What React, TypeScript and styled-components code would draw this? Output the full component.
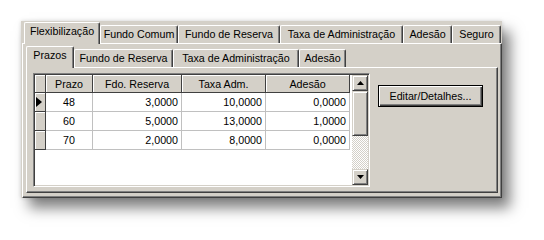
import React from 'react';
import styled, { createGlobalStyle } from 'styled-components';

const GlobalStyle = createGlobalStyle`
  html, body {
    margin: 0;
    padding: 0;
    background: #ffffff;
  }
  body {
    font-family: "Liberation Sans", Arial, sans-serif;
    font-size: 10.7px;
    color: #000;
  }
`;

const face = '#d4d0c8';

const Page = styled.div`
  width: 544px;
  height: 240px;
  box-sizing: border-box;
  padding: 21px 0 0 21px;
`;

// the outer tab control (the whole "window")
const Window = styled.div`
  width: 481px;
  height: 177px;
  box-sizing: border-box;
  padding: 1px 0 0 1px;
  background: ${face};
  display: flex;
  flex-direction: column;
  box-shadow: 8px 10px 13px rgba(0, 0, 0, 0.5), 0 0 4px rgba(0, 0, 0, 0.15);
`;

const TabStrip = styled.div<{ $indent: number }>`
  display: flex;
  align-items: flex-end;
  height: 21px;
  padding-left: ${p => p.$indent}px;
  flex-shrink: 0;
`;

const Tab = styled.div<{ $active?: boolean; $w: number }>`
  position: relative;
  z-index: ${p => (p.$active ? 2 : 1)};
  box-sizing: border-box;
  width: ${p => p.$w}px;
  height: ${p => (p.$active ? 22 : 18)}px;
  margin-bottom: ${p => (p.$active ? -1 : 0)}px;
  padding-top: 2px;
  background: ${face};
  border-top: 1px solid #fff;
  border-left: 1px solid #fff;
  border-right: 1px solid #404040;
  border-radius: 2px 2px 0 0;
  box-shadow: inset -1px 0 #808080;
  display: flex;
  justify-content: center;
  white-space: nowrap;
  line-height: 13px;
`;

const Sheet = styled.div<{ $pad: string }>`
  flex: 1;
  box-sizing: border-box;
  display: flex;
  flex-direction: column;
  padding: ${p => p.$pad};
  background: ${face};
  border-top: 1px solid #fff;
  border-left: 1px solid #fff;
  border-right: 1px solid #404040;
  border-bottom: 1px solid #404040;
  box-shadow: inset -1px -1px #808080;
`;

const SheetRow = styled.div`
  display: flex;
  align-items: flex-start;
`;

const Grid = styled.div`
  display: flex;
  width: 337px;
  height: 114px;
  box-sizing: border-box;
  padding: 1px;
  background: #fff;
  border-top: 1px solid #808080;
  border-left: 1px solid #808080;
  border-right: 1px solid #fff;
  border-bottom: 1px solid #fff;
  box-shadow: inset 1px 1px #404040, inset -1px -1px ${face};
`;

const Table = styled.div`
  width: 317px;
  display: grid;
  grid-template-columns: 11px 47px 89px 84px 84px;
  grid-template-rows: 18px repeat(3, 19px);
  align-content: start;
  background: #fff;
`;

const HeadCell = styled.div`
  box-sizing: border-box;
  background: ${face};
  border-right: 1px solid #404040;
  border-bottom: 1px solid #404040;
  box-shadow: inset 1px 1px #fff;
  display: flex;
  align-items: center;
  justify-content: center;
  white-space: nowrap;
`;

const Indicator = styled(HeadCell)`
  justify-content: flex-start;
  padding-left: 1px;
`;

const Cell = styled.div<{ $center?: boolean }>`
  box-sizing: border-box;
  border-right: 1px solid #c0c0c0;
  border-bottom: 1px solid #c0c0c0;
  display: flex;
  align-items: center;
  justify-content: ${p => (p.$center ? 'center' : 'flex-end')};
  padding: 0 3px;
`;

const ScrollBar = styled.div`
  width: 16px;
  display: flex;
  flex-direction: column;
`;

const Raised = styled.div<{ $h: number }>`
  box-sizing: border-box;
  height: ${p => p.$h}px;
  flex-shrink: 0;
  background: ${face};
  border-top: 1px solid ${face};
  border-left: 1px solid ${face};
  border-right: 1px solid #404040;
  border-bottom: 1px solid #404040;
  box-shadow: inset 1px 1px #fff, inset -1px -1px #808080;
  display: flex;
  align-items: center;
  justify-content: center;
`;

const Track = styled.div`
  flex: 1;
  background: repeating-conic-gradient(#fff 0 25%, ${face} 0 50%) 0 0 / 2px 2px;
`;

const Button = styled.button`
  width: 105px;
  height: 22px;
  margin: 12px 0 0 8px;
  padding: 0;
  font: 10.7px "Liberation Sans", Arial, sans-serif;
  color: #000;
  background: ${face};
  border: 1px solid #000;
  box-shadow: inset 1px 1px #fff, inset -1px -1px #404040, inset -2px -2px #808080;
`;

const Arrow = ({ up }: { up?: boolean }) => (
  <svg width="7" height="4" viewBox="0 0 7 4">
    <polygon points={up ? '3.5,0 7,4 0,4' : '0,0 7,0 3.5,4'} fill="#000" />
  </svg>
);

const outerTabs = [
  { label: 'Flexibilização', w: 76 },
  { label: 'Fundo Comum', w: 78 },
  { label: 'Fundo de Reserva', w: 102 },
  { label: 'Taxa de Administração', w: 123 },
  { label: 'Adesão', w: 49 },
  { label: 'Seguro', w: 49 },
];

const innerTabs = [
  { label: 'Prazos', w: 48 },
  { label: 'Fundo de Reserva', w: 99 },
  { label: 'Taxa de Administração', w: 126 },
  { label: 'Adesão', w: 47 },
];

const rows = [
  ['48', '3,0000', '10,0000', '0,0000'],
  ['60', '5,0000', '13,0000', '1,0000'],
  ['70', '2,0000', '8,0000', '0,0000'],
];

export default function App() {
  return (
    <Page>
      <GlobalStyle />
      <Window>
        <TabStrip $indent={2}>
          {outerTabs.map((t, i) => (
            <Tab key={t.label} $w={t.w} $active={i === 0}>
              {t.label}
            </Tab>
          ))}
        </TabStrip>
        <Sheet $pad="2px 3px 4px 3px">
          <TabStrip $indent={0}>
            {innerTabs.map((t, i) => (
              <Tab key={t.label} $w={t.w} $active={i === 0}>
                {t.label}
              </Tab>
            ))}
          </TabStrip>
          <Sheet $pad="5px 0 0 6px">
            <SheetRow>
              <Grid>
                <Table>
                  <HeadCell />
                  <HeadCell>Prazo</HeadCell>
                  <HeadCell>Fdo. Reserva</HeadCell>
                  <HeadCell>Taxa Adm.</HeadCell>
                  <HeadCell>Adesão</HeadCell>
                  {rows.map((r, i) => (
                    <React.Fragment key={r[0]}>
                      <Indicator>
                        {i === 0 && (
                          <svg width="6" height="10" viewBox="0 0 6 10">
                            <polygon points="0,0 6,5 0,10" fill="#000" />
                          </svg>
                        )}
                      </Indicator>
                      <Cell $center>{r[0]}</Cell>
                      <Cell>{r[1]}</Cell>
                      <Cell>{r[2]}</Cell>
                      <Cell>{r[3]}</Cell>
                    </React.Fragment>
                  ))}
                </Table>
                <ScrollBar>
                  <Raised $h={16}>
                    <Arrow up />
                  </Raised>
                  <Raised $h={45} />
                  <Track />
                  <Raised $h={16}>
                    <Arrow />
                  </Raised>
                </ScrollBar>
              </Grid>
              <Button>Editar/Detalhes...</Button>
            </SheetRow>
          </Sheet>
        </Sheet>
      </Window>
    </Page>
  );
}
